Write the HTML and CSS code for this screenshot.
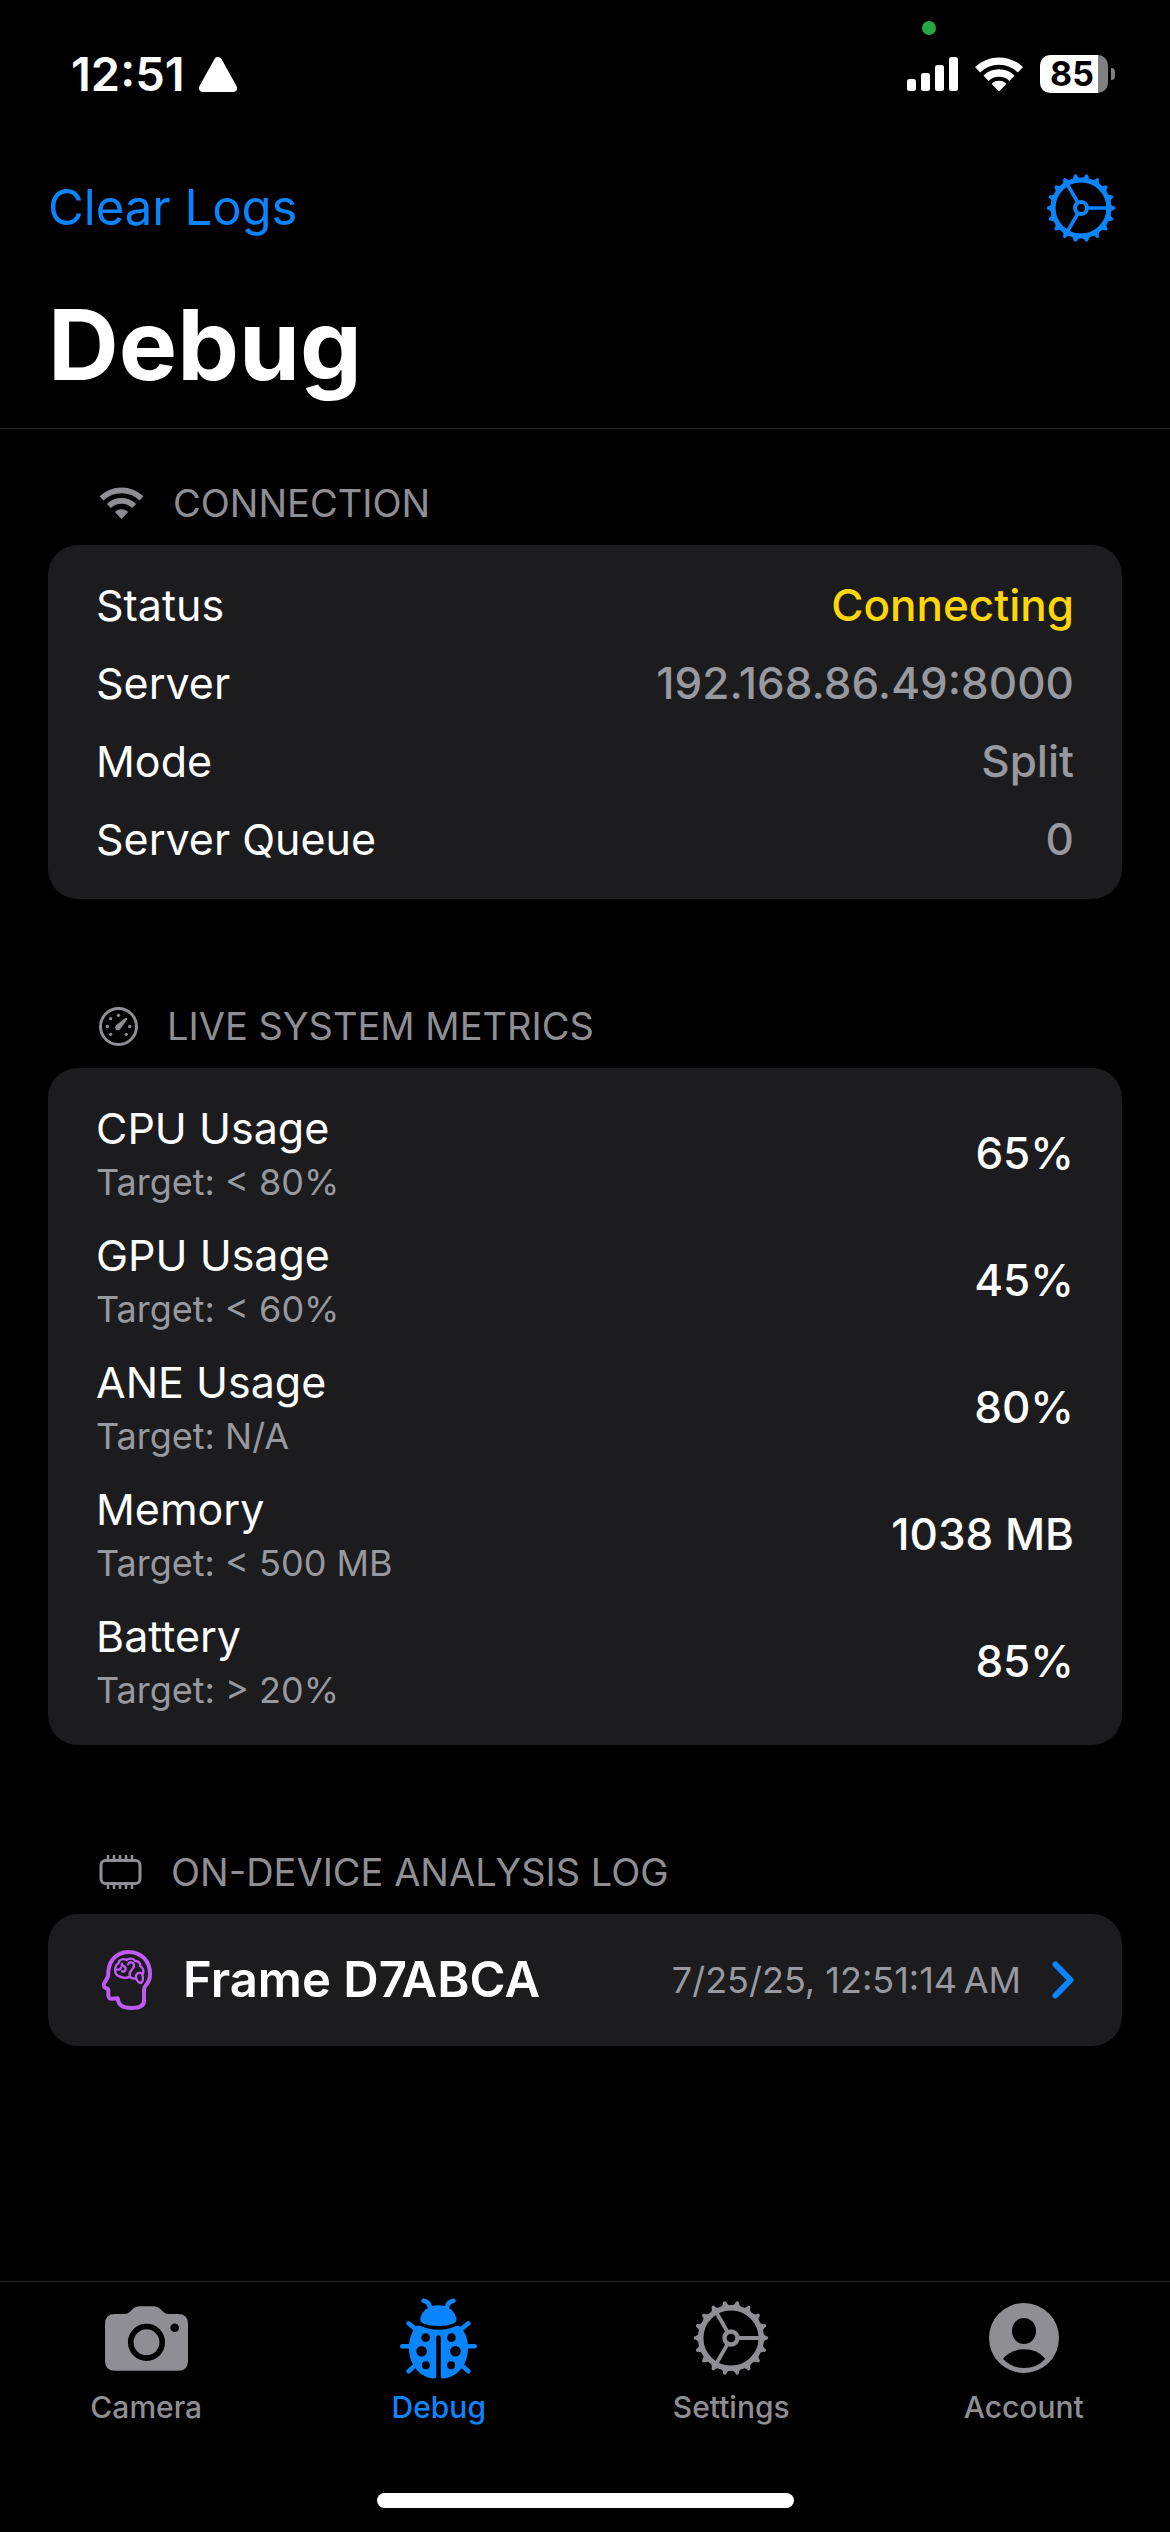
FILE: index.html
```html
<!DOCTYPE html>
<html lang="en">
<head>
<meta charset="utf-8">
<meta name="viewport" content="width=device-width, initial-scale=1">
<title>Debug</title>
<link rel="stylesheet" href="styles.css">
</head>
<body>
<svg class="sprite" aria-hidden="true">
  <defs>
    <path id="teeth" d="M-29 -5 Q-31 -1.6 -33.6 -1.4 Q-35 0 -33.6 1.4 Q-31 1.6 -29 5 Z M29 -5 Q31 -1.6 33.6 -1.4 Q35 0 33.6 1.4 Q31 1.6 29 5 Z"/>
    <symbol id="gear" viewBox="-35 -35 70 70">
      <g fill="currentColor">
        <use href="#teeth"/>
        <use href="#teeth" transform="rotate(20)"/>
        <use href="#teeth" transform="rotate(40)"/>
        <use href="#teeth" transform="rotate(60)"/>
        <use href="#teeth" transform="rotate(80)"/>
        <use href="#teeth" transform="rotate(100)"/>
        <use href="#teeth" transform="rotate(120)"/>
        <use href="#teeth" transform="rotate(140)"/>
        <use href="#teeth" transform="rotate(160)"/>
      </g>
      <g fill="none" stroke="currentColor">
        <circle r="27.9" stroke-width="5"/>
        <circle r="6" stroke-width="4"/>
        <path stroke-width="3.6" d="M7 0H27M-3.5 6.1L-13.5 23.4M-3.5 -6.1L-13.5 -23.4"/>
      </g>
    </symbol>
  </defs>
</svg>

<div class="screen">
  <header class="top">
    <div class="status-bar">
      <div class="status-left">
        <time class="clock">12:51</time>
        <svg class="icon-triangle" viewBox="0 0 38 35" aria-hidden="true"><path d="M19 4L34 31H4Z" fill="#fff" stroke="#fff" stroke-width="8" stroke-linejoin="round"/></svg>
      </div>
      <span class="privacy-dot"></span>
      <div class="status-right">
        <svg class="icon-signal" viewBox="0 0 51 34" aria-hidden="true"><g fill="#fff"><rect y="22" width="9" height="12" rx="2.5"/><rect x="14" y="16" width="9" height="18" rx="2.5"/><rect x="28" y="8" width="9" height="26" rx="2.5"/><rect x="42" width="9" height="34" rx="2.5"/></g></svg>
        <svg class="icon-wifi-status" viewBox="0 0 148 110" aria-hidden="true"><g fill="none" stroke="#fff" stroke-width="23"><path d="M8 42A95 95 0 0 1 140 42"/><path d="M34 68A57.500 57.500 0 0 1 114 68"/></g><path d="M74 106L54 85A32 32 0 0 1 94 85Z" fill="#fff" stroke="#fff" stroke-width="4" stroke-linejoin="round"/></svg>
        <div class="battery"><span class="battery-body">85</span><span class="battery-cap"></span></div>
      </div>
    </div>
    <div class="nav-row">
      <button class="clear" type="button">Clear Logs</button>
      <button class="gear-button" type="button" aria-label="Settings"><svg class="icon-gear" aria-hidden="true"><use href="#gear"/></svg></button>
    </div>
    <h1 class="title">Debug</h1>
  </header>

  <main class="content">
    <section class="section">
      <h2 class="section-head">
        <svg class="icon-wifi" viewBox="0 0 132 96" aria-hidden="true"><g fill="none" stroke="currentColor" stroke-width="17"><path d="M6 34A87 87 0 0 1 126 34"/><path d="M28 57A55 55 0 0 1 104 57"/></g><path d="M66 93L49 75A26 26 0 0 1 83 75Z" fill="currentColor" stroke="currentColor" stroke-width="4" stroke-linejoin="round"/></svg>
        CONNECTION
      </h2>
      <dl class="card">
        <div class="row"><dt>Status</dt><dd class="connecting">Connecting</dd></div>
        <div class="row"><dt>Server</dt><dd class="muted">192.168.86.49:8000</dd></div>
        <div class="row"><dt>Mode</dt><dd class="muted">Split</dd></div>
        <div class="row"><dt>Server Queue</dt><dd class="muted">0</dd></div>
      </dl>
    </section>

    <section class="section">
      <h2 class="section-head">
        <svg class="icon-gauge" viewBox="27 21 117 117" aria-hidden="true"><circle cx="85.500" cy="79.500" r="54" fill="none" stroke="currentColor" stroke-width="9"/><g fill="currentColor"><circle cx="85.500" cy="46" r="5"/><circle cx="62" cy="56" r="5"/><circle cx="52" cy="79.500" r="5"/><circle cx="62" cy="103" r="5"/><circle cx="109" cy="103" r="5"/><circle cx="119" cy="79.500" r="5"/><path d="M109 53Q113 55 111 59L91 87Q85 94 78 89Q72 82 79 75L106 54Z"/></g></svg>
        LIVE SYSTEM METRICS
      </h2>
      <dl class="card">
        <div class="row"><dt>CPU Usage <small>Target: &lt; 80%</small></dt><dd>65%</dd></div>
        <div class="row"><dt>GPU Usage <small>Target: &lt; 60%</small></dt><dd>45%</dd></div>
        <div class="row"><dt>ANE Usage <small>Target: N/A</small></dt><dd>80%</dd></div>
        <div class="row"><dt>Memory <small>Target: &lt; 500 MB</small></dt><dd>1038 MB</dd></div>
        <div class="row"><dt>Battery <small>Target: &gt; 20%</small></dt><dd>85%</dd></div>
      </dl>
    </section>

    <section class="section">
      <h2 class="section-head">
        <svg class="icon-chip" viewBox="0 0 42 34" aria-hidden="true"><rect x="1.500" y="5.500" width="39" height="23" rx="4.500" fill="none" stroke="currentColor" stroke-width="3"/><path d="M8.500 5V1M14.500 5V1M20.500 5V1M26.500 5V1M32.500 5V1M8.500 29V33M14.500 29V33M20.500 29V33M26.500 29V33M32.500 29V33" stroke="currentColor" stroke-width="2.600" stroke-linecap="round"/></svg>
        ON-DEVICE ANALYSIS LOG
      </h2>
      <button class="card log" type="button">
        <svg class="icon-head" viewBox="24 19 150 180" aria-hidden="true"><g fill="none" stroke="#bf5af2" stroke-linejoin="round" stroke-linecap="round"><path stroke-width="12" d="M71 164L56 165Q44 167 43 155V141Q43 135 37 134Q27 130 30 120L41 101Q43 96 43 84C45 47 72 25 103 25C143 25 168 53 168 90C168 108 164 115 154 127Q150 132 150 140V172C150 187 138 193 112 193C84 193 74 184 71 164Z"/><path stroke-width="7" d="M76 98C59 92 60 66 74 58C74 47 90 44 98 49C106 42 120 44 123 52C134 52 141 60 138 67C149 72 151 86 145 94C149 104 147 116 139 118C131 116 129 110 126 104C118 106 112 104 108 99C98 104 84 102 76 98ZM65 76Q78 82 81 71M84 60C79 68 96 65 95 76C94 84 88 85 84 83M102 62C106 52 121 55 120 67C118 80 101 82 108 98M126 104C124 88 133 86 145 89"/></g></svg>
        <span class="log-name">Frame D7ABCA</span>
        <span class="log-date">7/25/25, 12:51:14&#8239;AM</span>
        <svg class="icon-chevron" viewBox="0 0 22 38" aria-hidden="true"><path d="M3.500 3.500L18.500 19L3.500 34.500" fill="none" stroke="#0a84ff" stroke-width="6" stroke-linecap="round" stroke-linejoin="round"/></svg>
      </button>
    </section>
  </main>

  <footer class="bottom">
    <nav class="tabs">
      <a class="tab" href="#camera">
        <span class="tab-icon"><svg class="icon-camera" viewBox="0 0 250 195" aria-hidden="true"><path fill="currentColor" d="M30 24H58Q68 24 76 16L84 8Q92 0 102 0H148Q158 0 166 8L174 16Q182 24 192 24H220Q250 24 250 54V165Q250 195 220 195H30Q0 195 0 165V54Q0 24 30 24Z"/><circle cx="125" cy="109" r="47.500" fill="none" stroke="#000" stroke-width="17"/><circle cx="210" cy="65" r="13"/></svg></span>
        Camera
      </a>
      <a class="tab active" href="#debug" aria-current="page">
        <span class="tab-icon"><svg class="icon-bug" viewBox="0 0 232 243" aria-hidden="true"><g fill="currentColor"><path d="M61 66C61 40 86 21 115.500 21C145 21 170 40 170 66Q170 72 162 76Q140 84 115.500 84Q91 84 69 76Q61 72 61 66Z"/><path d="M50 84Q55 81 62 84Q86 95 116 95Q146 95 169 84Q176 81 182 86Q205 110 205 150C205 205 168 240 130 242Q123 243 123 236V119A7 7 0 0 0 109 119V236Q109 243 102 242C64 240 27 205 27 150Q27 110 50 84Z"/></g><g fill="none" stroke="currentColor" stroke-width="14" stroke-linecap="round"><path d="M71 8Q87 11 90 26M161 8Q145 11 142 26M7 145H30M225 145H202M26 76L46 92M206 76L186 92M26 220L44 204M206 220L188 204"/></g><circle cx="77" cy="119" r="13"/><circle cx="65" cy="160" r="16"/><circle cx="78" cy="202" r="12"/><circle cx="155" cy="119" r="13"/><circle cx="167" cy="160" r="16"/><circle cx="154" cy="202" r="12"/></svg></span>
        Debug
      </a>
      <a class="tab" href="#settings">
        <span class="tab-icon"><svg class="icon-gear-tab" aria-hidden="true"><use href="#gear"/></svg></span>
        Settings
      </a>
      <a class="tab" href="#account">
        <span class="tab-icon"><svg class="icon-account" viewBox="0 0 210 210" aria-hidden="true"><circle cx="105" cy="105" r="105" fill="currentColor"/><ellipse cx="105" cy="84" rx="36" ry="39"/><path d="M42 167Q66 139 105 139Q145 139 169 167Q144 195 105 195Q67 195 42 167Z"/></svg></span>
        Account
      </a>
    </nav>
    <div class="home-indicator"></div>
  </footer>
</div>
</body>
</html>
```
FILE: styles.css
```css
* {
  box-sizing: border-box;
}

body {
  margin: 0;
  background: #000;
  color: #fff;
  font-family: Inter, "Liberation Sans", sans-serif;
  font-size: 44px;
  line-height: 54px;
}

h1, h2, dl, dd {
  margin: 0;
}

button {
  padding: 0;
  border: 0;
  background: none;
  color: inherit;
  font: inherit;
  text-align: left;
}

svg {
  display: block;
  flex: none;
}

.sprite {
  position: absolute;
  width: 0;
  height: 0;
}

.screen {
  display: flex;
  flex-direction: column;
  min-height: 100vh;
}

/* Status bar and navigation */

.top {
  border-bottom: 1px solid #262628;
  padding-bottom: 24px;
}

.status-bar {
  position: relative;
  display: flex;
  align-items: center;
  justify-content: space-between;
  padding: 47px 55px 47px 71px;
}

.status-left {
  display: flex;
  align-items: center;
  gap: 14px;
}

.clock {
  font-size: 47px;
  font-weight: 600;
}

.status-right {
  display: flex;
  align-items: center;
  gap: 17px;
}

.privacy-dot {
  position: absolute;
  top: 21px;
  right: 234px;
  width: 14px;
  height: 14px;
  border-radius: 50%;
  background: #28a745;
}

.icon-triangle { width: 38px; height: 35px; }
.icon-signal { width: 51px; height: 34px; }
.icon-wifi-status { width: 48px; height: 36px; }

.battery {
  display: flex;
  align-items: center;
  gap: 3px;
}

.battery-body {
  width: 68px;
  padding-right: 4px;
  border-radius: 10px;
  background: linear-gradient(to right, #fff 85%, #808080 85%);
  color: #000;
  font-size: 34px;
  font-weight: 700;
  line-height: 38px;
  text-align: center;
}

.battery-cap {
  width: 4px;
  height: 12px;
  border-radius: 0 4px 4px 0;
  background: #808080;
}

.nav-row {
  display: flex;
  align-items: center;
  justify-content: space-between;
  height: 120px;
  padding: 0 54px 0 48px;
  color: #0a84ff;
}

.clear {
  font-size: 49px;
}

.icon-gear { width: 70px; height: 70px; }

.title {
  padding: 18px 48px 0;
  font-size: 98px;
  font-weight: 700;
  line-height: 118px;
}

/* Sections */

.content {
  display: flex;
  flex-direction: column;
  gap: 103px;
  padding: 50px 48px;
}

.section-head {
  display: flex;
  align-items: center;
  gap: 29px;
  margin-bottom: 18px;
  padding-left: 51px;
  color: #8e8e93;
  font-size: 38px;
  font-weight: 400;
  line-height: 48px;
}

.icon-wifi { width: 45px; height: 32px; }
.icon-gauge { width: 39px; height: 39px; }
.icon-chip { width: 43px; height: 34px; }

.card {
  display: flex;
  flex-direction: column;
  gap: 24px;
  padding: 33px 48px;
  border-radius: 30px;
  background: #1c1c1e;
}

.row {
  display: flex;
  align-items: center;
  justify-content: space-between;
}

.row dt {
  font-size: 43px;
}

.row small {
  display: block;
  margin-top: 6px;
  color: #98989f;
  font-size: 36px;
  line-height: 43px;
}

.row dd {
  font-weight: 500;
}

.row .connecting {
  color: #ffd60a;
}

.row .muted {
  color: #98989f;
}

.log {
  flex-direction: row;
  align-items: center;
  gap: 31px;
  width: 100%;
  height: 132px;
  padding-left: 54px;
}

.icon-head { width: 50px; height: 60px; }
.icon-chevron { width: 22px; height: 38px; }

.log-name {
  flex: 1;
  font-size: 49px;
  font-weight: 600;
}

.log-date {
  color: #98989f;
  font-size: 36px;
}

/* Tab bar */

.bottom {
  margin-top: auto;
  border-top: 1px solid #262628;
  padding: 15px 0 24px;
}

.tabs {
  display: grid;
  grid-template-columns: repeat(4, 1fr);
  margin-bottom: 68px;
}

.tab {
  display: flex;
  flex-direction: column;
  align-items: center;
  gap: 10px;
  color: #8e8e93;
  font-size: 30px;
  font-weight: 500;
  line-height: 36px;
  text-decoration: none;
}

.tab.active {
  color: #0a84ff;
}

.tab-icon {
  display: flex;
  align-items: center;
  height: 82px;
}

.icon-camera { width: 83px; height: 65px; }
.icon-bug { width: 77px; height: 81px; }
.icon-gear-tab { width: 76px; height: 76px; }
.icon-account { width: 70px; height: 70px; }

.home-indicator {
  width: 417px;
  height: 15px;
  margin: 0 auto;
  border-radius: 8px;
  background: #fff;
}
```
